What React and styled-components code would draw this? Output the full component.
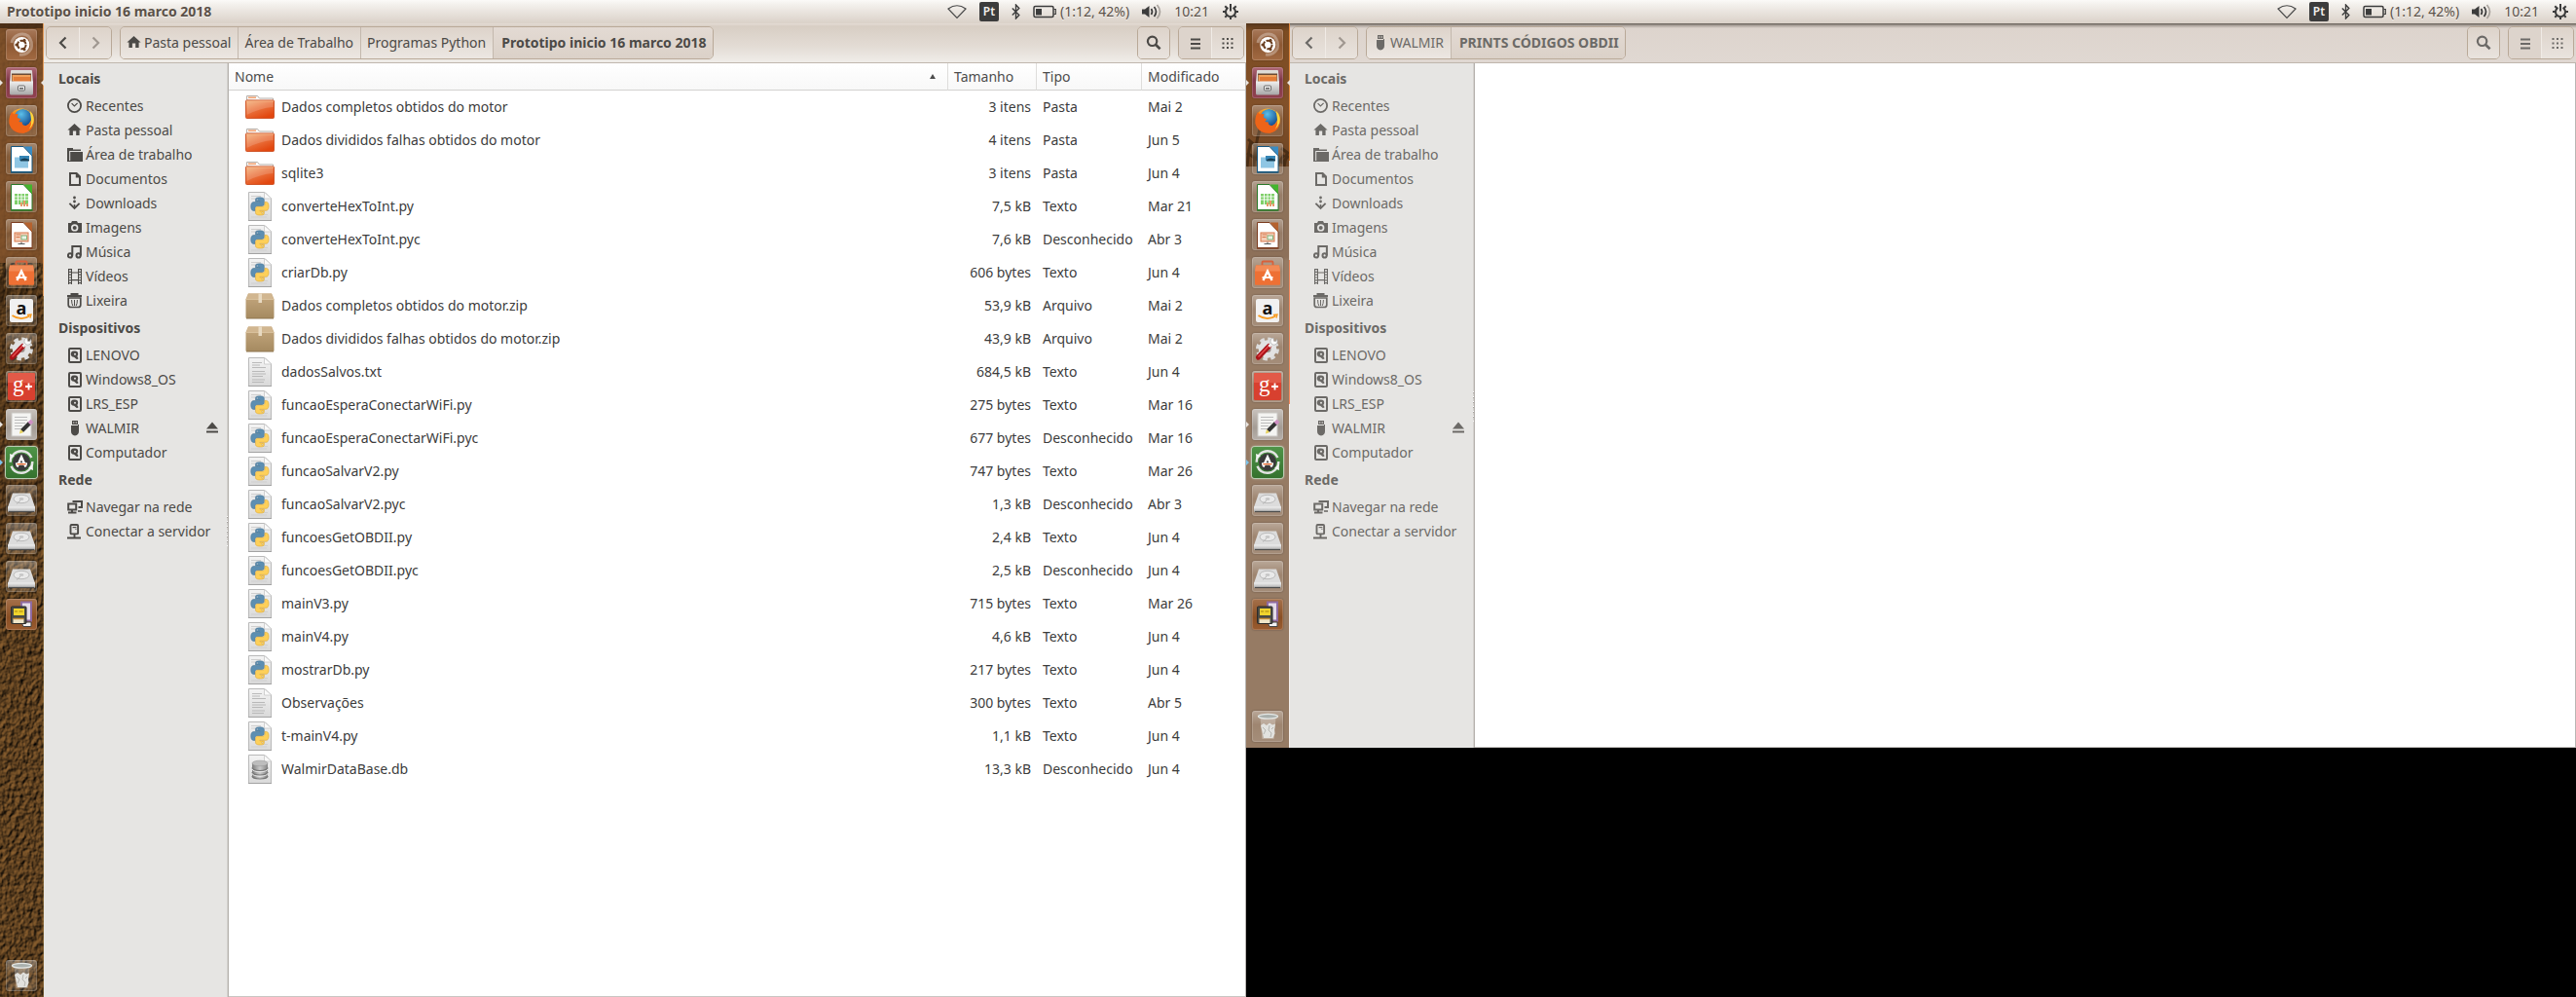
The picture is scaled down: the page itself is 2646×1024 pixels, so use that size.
import React from "react";
import styled, { createGlobalStyle, css } from "styled-components";

const GlobalStyle = createGlobalStyle`
  * { box-sizing: border-box; }
  body {
    margin: 0;
    background: #000;
    font-family: "Noto Sans", "Open Sans", sans-serif;
    font-size: 14px;
    line-height: 20px;
    color: #3c3b37;
  }
  button { font: inherit; color: inherit; }
`;

/* ---------- page frame ---------- */

const Desktop = styled.main`
  display: grid;
  grid-template-columns: 1280fr 1366fr;
  align-items: start;
  min-height: 100vh;
  background: #000;
`;

const Monitor = styled.section`
  display: flex;
  flex-direction: column;
  height: ${(p) => (p.$short ? "75vh" : "100vh")};
  min-width: 0;
`;

const Workspace = styled.div`
  display: flex;
  flex: 1;
  min-height: 0;
`;

/* ---------- top panel ---------- */

const Panel = styled.header`
  display: flex;
  align-items: center;
  height: 24px;
  padding: 0 7px;
  background: linear-gradient(#fbfaf8 0, #f3f0ec 20%, #dad1c8 100%);
  color: #5b5148;
  text-shadow: 0 1px 0 rgba(255, 255, 255, 0.6);
`;

const PanelTitle = styled.h1`
  margin: 0;
  font-size: 14px;
  line-height: 20px;
  font-weight: 700;
`;

const Indicators = styled.div`
  display: flex;
  align-items: center;
  margin-left: auto;
  gap: 13px;

  svg { display: block; }
`;

const Indicator = styled.button`
  display: flex;
  align-items: center;
  gap: 4px;
  padding: 0;
  border: 0;
  background: none;
  text-shadow: inherit;
`;

const Keyboard = styled(Indicator)`
  justify-content: center;
  width: 20px;
  height: 20px;
  border-radius: 2px;
  background: #3c3c3c;
  color: #f2efeb;
  font-size: 12px;
  font-weight: 600;
  text-shadow: none;
`;

/* ---------- launcher ---------- */

const Bar = styled.nav`
  position: relative;
  display: flex;
  flex-direction: column;
  flex: 0 0 45px;
  gap: 7px;
  padding: 6px 7px 6px 6px;
  overflow: hidden;
  background: ${(p) =>
    p.$plain
      ? "linear-gradient(#54361c 0, #7c4c22 8px, #82512a 90px, #6b4322 147px, #8f735b 147px, #8d7059 240px, #967b64 244px, #967b64 100%)"
      : "#553714"};
`;

const Wallpaper = styled.svg`
  position: absolute;
  inset: 0;
  width: 100%;
  height: 100%;
`;

const Tile = styled.button`
  position: relative;
  flex: 0 0 32px;
  width: 32px;
  height: 32px;
  padding: 0;
  border: 0;
  border-radius: 3px;
  background: ${(p) =>
    p.$tint ||
    "linear-gradient(rgba(255,255,255,0.34), rgba(255,255,255,0.08) 45%, rgba(255,255,255,0.14))"};
  box-shadow: inset 0 0 0 1px rgba(255, 255, 255, 0.16), 0 0 2px rgba(0, 0, 0, 0.35);

  ${(p) =>
    p.$framed &&
    css`box-shadow: 0 0 0 1px #b9cdb2, 0 0 3px #fff;`}

  svg { display: block; }
`;

const BottomTile = styled(Tile)`
  margin-top: auto;
`;

const Pip = styled.span`
  position: absolute;
  top: 13px;
  border: 3px solid transparent;
  ${(p) =>
    p.$right
      ? css`right: -7px; border-left-width: 0; border-right-color: #e9e4df;`
      : css`left: -6px; border-right-width: 0; border-left-color: ${p.$color || "#e9e4df"};`}
`;

/* ---------- file manager ---------- */

const Window = styled.section`
  display: flex;
  flex-direction: column;
  flex: 1;
  min-width: 0;
  background: #fff;
  color: ${(p) => (p.$faded ? "#6c6a67" : "#4c4a47")};
`;

const Toolbar = styled.div`
  display: flex;
  align-items: center;
  gap: 8px;
  height: 41px;
  padding: 0 2px;
  border-bottom: 1px solid #bfb6ad;
  background: ${(p) =>
    p.$faded
      ? "linear-gradient(#5d5750 0, #a89f97 2px, #ddd4cd 5px, #e0d8d2 100%)"
      : "linear-gradient(#e4dcd5 0, #d8cec4 3px, #e3dcd5 60%, #f0ede9 100%)"};
`;

const Group = styled.div`
  display: flex;
  height: 34px;
  overflow: hidden;
  border: 1px solid #b9a998;
  border-radius: 5px;
  box-shadow: inset 0 1px 1px rgba(120, 95, 70, 0.15);
`;

const ToolButton = styled.button`
  display: flex;
  align-items: center;
  justify-content: center;
  width: ${(p) => (p.$last ? "32px" : "34px")};
  padding: 0;
  border: 0;
  border-right: ${(p) => (p.$last ? "0" : "1px solid #f0ebe6")};
  background: ${(p) => (p.$on ? "#ddd4cc" : "linear-gradient(#ddd3ca, #e9e3de)")};
  color: ${(p) => (p.$dim ? "#a09891" : "inherit")};
`;

const Spacer = styled.div`
  flex: 1;
`;

const Crumb = styled.button`
  display: flex;
  align-items: center;
  gap: 2px;
  padding: 0 7px 0 6px;
  border: 0;
  border-right: 1px solid #c3b8ad;
  background: linear-gradient(#ddd3ca, #ece7e2);
  white-space: nowrap;

  &:last-child {
    padding: 0 6px 0 8px;
    border-right: 0;
    background: linear-gradient(#e3dad3, #dbd1c8);
    font-weight: 700;
  }
`;

const Body = styled.div`
  display: flex;
  flex: 1;
  min-height: 0;
`;

const Side = styled.aside`
  position: relative;
  flex: 0 0 190px;
  border-right: 1px solid #b5b1ad;
  background: #e6e5e3;
  box-shadow: inset -1px 0 0 #d3d1ce;
`;

const Grip = styled.span`
  position: absolute;
  top: calc(50% - 15px);
  right: 0;
  width: 1px;
  height: 31px;
  background: repeating-linear-gradient(#fff 0 1px, #a5a19d 1px 2px, #d3d1ce 2px 5px);
`;

const SideTitle = styled.h2`
  margin: 0;
  padding-left: 15px;
  font-size: 14px;
  line-height: 31px;
  font-weight: 700;
`;

const SideList = styled.ul`
  margin: 0;
  padding: 0;
  list-style: none;
`;

const SideItem = styled.li`
  display: flex;
  align-items: center;
  height: 25px;
  padding: 0 9px 0 24px;
`;

const SideLink = styled.a`
  display: flex;
  align-items: center;
  gap: 3px;
  color: inherit;
  text-decoration: none;
  white-space: nowrap;
`;

const Eject = styled.button`
  display: flex;
  margin-left: auto;
  padding: 0;
  border: 0;
  background: none;
`;

const Content = styled.div`
  flex: 1;
  min-width: 0;
  border-right: 1px solid #b9b6b3;
  border-bottom: 1px solid #c9c6c3;
  background: #fff;
`;

const Files = styled.table`
  width: 100%;
  border-collapse: separate;
  border-spacing: 0;
  table-layout: fixed;
  color: #3c3c3c;
`;

const Head = styled.th`
  width: ${(p) => p.$width || "auto"};
  height: 28px;
  padding: 0 6px;
  border-right: ${(p) => (p.$last ? "0" : "1px solid #dedddb")};
  border-bottom: 1px solid #d3d2d0;
  background: linear-gradient(#fff, #f8f8f8);
  color: #4c4c4c;
  font-weight: 400;
  text-align: left;
`;

const HeadRow = styled.span`
  display: flex;
  align-items: center;
  justify-content: space-between;
  padding-right: 6px;
`;

const Cell = styled.td`
  height: 34px;
  padding: 0 6px;
  text-align: ${(p) => (p.$right ? "right" : "left")};
  white-space: nowrap;
`;

const NameCell = styled.div`
  display: flex;
  align-items: center;
  gap: 6px;
  padding-left: 10px;
`;

/* ---------- symbolic icons, drawn on a 16 unit grid ---------- */

const glyphs = {
  clock: (
    <g fill="none" stroke="currentColor">
      <circle cx="7.5" cy="7.5" r="6.6" strokeWidth="1.8" />
      <path d="M4.6 5.2 7.4 8l3.2-3.2" strokeWidth="1.2" />
    </g>
  ),
  home: <path fill="currentColor" d="M7.5 1 .4 7.4h2V13h3.5V8.6h3.3V13h3.4V7.4h2z" />,
  folder: (
    <path fill="currentColor" d="M0 1h6v1.6h8V4H2.2v10H15V15H0zM3.2 5H16v10H3.2z" />
  ),
  doc: (
    <path fill="currentColor" fillRule="evenodd" d="M2 1h8l4 4v10H2zM4 3v10h8V6.4H8.8V3z" />
  ),
  down: (
    <g>
      <circle cx="7.5" cy="2" r="1.4" fill="currentColor" />
      <circle cx="7.5" cy="6" r="1.4" fill="currentColor" />
      <path d="M2.4 7.8 7.5 13l5.1-5.2" fill="none" stroke="currentColor" strokeWidth="1.9" />
      <path d="M7.5 9v3" stroke="currentColor" strokeWidth="1.6" />
    </g>
  ),
  camera: (
    <g>
      <path
        fill="currentColor"
        fillRule="evenodd"
        d="M1 3h3l1-2h5l1 2h4v10H1zM7.7 4.2a3.7 3.7 0 1 0 0 7.4 3.7 3.7 0 0 0 0-7.4z"
      />
      <circle cx="7.7" cy="7.9" r="2" fill="currentColor" />
    </g>
  ),
  music: (
    <g fill="none" stroke="currentColor" strokeWidth="2">
      <circle cx="3" cy="11.4" r="2.1" />
      <circle cx="11.6" cy="11.4" r="2.1" />
      <path d="M5.3 11.4V2h8.6v9.4" />
    </g>
  ),
  film: (
    <g stroke="currentColor" fill="none">
      <path d="M1.5 0v16M4.5 0v16M11.5 0v16M14.5 0v16" strokeWidth="1" />
      <path d="M4 4h8M4 11.6h8" strokeWidth="1.2" />
      <path d="M3 0v16M13 0v16" strokeWidth="2.6" strokeDasharray="1.2 1.6" />
    </g>
  ),
  trash: (
    <g fill="none" stroke="currentColor">
      <path d="M3.5 1h8M0 3h15" strokeWidth="1.8" />
      <path d="M1.2 5h12.6v7q0 2.500-2.500 2.500H3.700q-2.500 0-2.500-2.500z" strokeWidth="1.700" />
      <path d="M4.600 7q0 4 1.200 6M7.500 7v6M10.400 7q0 4-1.200 6" strokeWidth="1" />
    </g>
  ),
  disk: (
    <g>
      <rect x="2" y="1" width="12" height="14" rx="1" fill="none" stroke="currentColor" strokeWidth="2" />
      <path fill="currentColor" d="M8 3.6a3.2 3.2 0 0 1 3.2 3.2c0 1-.4 1.700-.9 2.300l1.300 2.200-1.600.9-3-2.400A3.200 3.200 0 1 1 8 3.600z" />
      <circle cx="8" cy="6.8" r="1" fill="#e6e5e3" />
    </g>
  ),
  usb: (
    <path
      fill="currentColor"
      fillRule="evenodd"
      d="M5 0h6v4h1v7q0 3.600-4 4.600Q4 14.600 4 11V4.900h7V4H5zM6.300 1.200v1.500h1V1.200zM8.700 1.200v1.500h1V1.200z"
    />
  ),
  network: (
    <g fill="none" stroke="currentColor" strokeWidth="2">
      <rect x="1.2" y="4.500" width="8" height="6" />
      <path d="M6.500 3V2H15v6h-3.500M1 13.500h8.500M5 11v2" />
      <path d="M11 12h4" strokeWidth="1.600" />
    </g>
  ),
  server: (
    <g fill="none" stroke="currentColor" strokeWidth="1.900">
      <rect x="3.500" y="1" width="7.600" height="9.400" rx="1" />
      <path d="M7.500 10.500V14M0 14.500h14" />
      <path d="M5.600 3.600h3.800" strokeWidth="1.200" />
      <path d="M8.400 5.500h1" strokeWidth="1.200" />
    </g>
  ),
  eject: <path fill="currentColor" d="M9 1.500 15 8.500H3zM3 10.500h12v2H3z" />,
  back: <path d="M10.500 2.500 5 8l5.500 5.500" fill="none" stroke="currentColor" strokeWidth="2.200" />,
  next: <path d="M5.500 2.500 11 8l-5.500 5.500" fill="none" stroke="currentColor" strokeWidth="2.200" />,
  search: (
    <g fill="none" stroke="currentColor">
      <circle cx="6.600" cy="6.300" r="4.700" strokeWidth="2.200" />
      <path d="m10 9.800 4.600 4.400" strokeWidth="2.600" />
    </g>
  ),
  list: <path d="M3 4.500h10M3 9h10M3 13.500h10" stroke="currentColor" strokeWidth="2" />,
  grid: (
    <path
      d="M2.500 4h11M2.500 8.500h11M2.500 13h11"
      stroke="currentColor"
      strokeWidth="2"
      strokeDasharray="2 2.500"
    />
  ),
};

const Glyph = ({ name, size = 16 }) => (
  <svg width={size} height={size} viewBox="0 0 16 16" aria-hidden="true">
    {glyphs[name]}
  </svg>
);

/* ---------- file type icons ---------- */

const pythonHalf =
  "M14.25.18l.9.2.73.26.59.3.45.32.34.34.25.34.16.33.1.3.04.26.02.2-.01.13V8.5l-.05.63-.13.55-.21.46-.26.38-.3.31-.33.25-.35.19-.35.14-.33.1-.3.07-.26.04-.21.02H8.77l-.69.05-.59.14-.5.22-.41.27-.33.32-.27.35-.2.36-.15.37-.1.35-.07.32-.04.27-.02.21v3.06H3.17l-.21-.03-.28-.07-.32-.12-.35-.18-.36-.26-.36-.36-.35-.46-.32-.59-.28-.73-.21-.88-.14-1.05-.05-1.23.06-1.22.16-1.04.24-.87.32-.71.36-.57.4-.44.42-.33.42-.24.4-.16.36-.1.32-.05.24-.01h.16l.06.01h8.16v-.83H6.18l-.01-2.75-.02-.37.05-.34.11-.31.17-.28.25-.26.31-.23.38-.2.44-.18.51-.15.58-.12.64-.1.71-.06.77-.04.84-.02 1.27.05zm-6.3 1.98l-.23.33-.08.41.08.41.23.34.33.22.41.09.41-.09.33-.22.23-.34.08-.41-.08-.41-.23-.33-.33-.22-.41-.09-.41.09z";

const Sheet = () => (
  <g>
    <path d="M4.500 1.500H21L27.500 8v22.500h-23z" fill="url(#paper)" stroke="#b9b9b9" />
    <path d="M4 30.500h24" stroke="#a3a3a3" />
    <path d="M20.500 1.500v6.500H28z" fill="#fafafa" stroke="#c6c6c6" strokeWidth=".8" />
  </g>
);

const fileArt = {
  folder: (
    <g>
      <path d="M2.500 9V4.500h11l2 2.500h14V10z" fill="#fafafa" stroke="#b7b0aa" />
      <path d="M4 6.200h8" stroke="#f08a4c" strokeWidth="1.200" />
      <rect x="1.500" y="9" width="29" height="18.500" rx="1" fill="url(#orange)" stroke="#d0562a" />
      <path d="M2.500 10h27v6Q16 17 2.500 24z" fill="#fff" opacity=".16" />
      <path d="M2 10h28" stroke="#f4b184" />
    </g>
  ),
  python: (
    <g>
      <Sheet />
      <path d="M7 5.500h10M7 8h6M7 27h16M19 24.500h5" stroke="#cfcfcf" />
      <g transform="translate(6.800 6.800) scale(.76)">
        <path d={pythonHalf} fill="#5d8fb2" stroke="#44708f" strokeWidth=".7" />
        <path d={pythonHalf} fill="#fdd05a" stroke="#d9a32c" strokeWidth=".7" transform="rotate(180 12 12)" />
      </g>
    </g>
  ),
  text: (
    <g>
      <Sheet />
      <path
        d="M8 6.500h10M8 9h8M8 11.500h14M8 15.500h13M8 18h14M8 20.500h11M8 24h13M8 26.500h12"
        stroke="#b3b3b3"
        strokeWidth=".9"
      />
    </g>
  ),
  database: (
    <g>
      <Sheet />
      <path d="M8 10v13a8 3 0 0 0 16 0V10z" fill="url(#steel)" />
      <path d="M8 14.500a8 3 0 0 0 16 0M8 19a8 3 0 0 0 16 0M8 23a8 3 0 0 0 16 0" fill="none" stroke="#777" strokeWidth="1.200" />
      <path d="M8 15.800a8 3 0 0 0 16 0M8 20.300a8 3 0 0 0 16 0" fill="none" stroke="#eee" strokeWidth=".9" />
      <ellipse cx="16" cy="10" rx="8" ry="2.800" fill="#bdbdbd" stroke="#999" strokeWidth=".6" />
    </g>
  ),
  archive: (
    <g>
      <path d="M4 3.500h24l2.500 6v18.500q0 1-1 1h-27q-1 0-1-1V9.500z" fill="url(#card)" />
      <path d="M4 3.500h24l2.500 6h-29z" fill="#d1b690" />
      <path d="M1.500 9.500h29" stroke="#dcc6a3" strokeWidth=".8" />
      <path d="M14.500 3.500h3.500V13h-3.500z" fill="#e8dac2" />
      <path d="M2 29h28" stroke="#8f7650" />
    </g>
  ),
};

const FileIcon = ({ kind }) => (
  <svg width="32" height="32" viewBox="0 0 32 32" aria-hidden="true">
    {fileArt[kind]}
  </svg>
);

const Paints = styled.svg`
  position: absolute;
`;

const SharedPaints = () => (
  <Paints width="0" height="0" aria-hidden="true">
    <defs>
      <linearGradient id="paper" x2="0" y2="1">
        <stop stopColor="#f4f4f4" />
        <stop offset="1" stopColor="#d9d9d9" />
      </linearGradient>
      <linearGradient id="orange" x2=".6" y2="1">
        <stop stopColor="#f3b27a" />
        <stop offset=".5" stopColor="#ea7440" />
        <stop offset="1" stopColor="#e2470f" />
      </linearGradient>
      <linearGradient id="steel">
        <stop stopColor="#7d7d7d" />
        <stop offset=".5" stopColor="#c9c9c9" />
        <stop offset="1" stopColor="#858585" />
      </linearGradient>
      <linearGradient id="card" x2="0" y2="1">
        <stop stopColor="#c5a87f" />
        <stop offset="1" stopColor="#a58a60" />
      </linearGradient>
      <radialGradient id="flame" cx=".3" cy=".75" r=".9">
        <stop stopColor="#e8321a" />
        <stop offset=".55" stopColor="#f27416" />
        <stop offset="1" stopColor="#ffd83a" />
      </radialGradient>
      <radialGradient id="globe" cx=".4" cy=".3" r=".8">
        <stop stopColor="#5cc0ea" />
        <stop offset="1" stopColor="#0c3f86" />
      </radialGradient>
      <linearGradient id="metal" x2="0" y2="1">
        <stop stopColor="#f0f0f0" />
        <stop offset="1" stopColor="#a6a6a6" />
      </linearGradient>
      <filter id="bark" x="0" y="0" width="100%" height="100%" colorInterpolationFilters="sRGB">
        <feTurbulence type="fractalNoise" baseFrequency="0.22 0.17" numOctaves="3" seed="8" />
        <feDiffuseLighting surfaceScale="2" lightingColor="#8f6230">
          <feDistantLight azimuth="225" elevation="40" />
        </feDiffuseLighting>
      </filter>
    </defs>
  </Paints>
);

/* ---------- launcher icons ---------- */

const Office = ({ edge, fold, children }) => (
  <g>
    <path d="M5.500 3.500H18L27 13v16.500H5.500z" fill="#fff" stroke={edge} />
    <path d="M5 30h22.500" stroke={edge} strokeWidth="1.400" />
    <path d="M18.500 3.500H27V13z" fill={fold} />
    {children}
  </g>
);

const appArt = {
  dash: (
    <g>
      <path d="M6 14a11 11 0 0 1 17-7q5 6 3 13-4 7-12 6" fill="none" stroke="#fff" strokeOpacity=".3" strokeWidth="3" />
      <circle cx="16.300" cy="16" r="8" fill="#fff" />
      <circle cx="16.300" cy="16" r="4.300" fill="none" stroke="#6b3f20" strokeWidth="2" strokeDasharray="7.600 1.400" />
      <circle cx="10.900" cy="16" r="1.500" fill="#6b3f20" />
      <circle cx="19" cy="11.300" r="1.500" fill="#6b3f20" />
      <circle cx="19" cy="20.700" r="1.500" fill="#6b3f20" />
    </g>
  ),
  files: (
    <g>
      <path d="M5 4q0-1 1-1h20q1 0 1 1l1 12H4z" fill="#dedbd6" />
      <path d="M6 6.500h20V15H6z" fill="#6b4a34" />
      <path d="M6.500 8h19v6.500h-19z" fill="#f0a15c" />
      <path d="M8 10h17v5H8z" fill="#e27c37" />
      <path d="M4 14.500h24V27q0 1.500-1.500 1.500h-21Q4 28.500 4 27z" fill="url(#metal)" />
      <rect x="12.500" y="19" width="7" height="5" rx="1" fill="#eee" stroke="#6a6a6a" />
      <path d="M14 21.800h4" stroke="#555" strokeWidth="1.400" />
    </g>
  ),
  firefox: (
    <g>
      <circle cx="16" cy="16" r="12.600" fill="url(#flame)" />
      <circle cx="17.500" cy="12.800" r="8.800" fill="url(#globe)" />
      <path d="M4 11.500 6 7l2 2.500q2.500-1 4.500-.3l-.8 3.600 3.600 1.600-2 2.500 3.500.6q-.5 4 5.200 3.300 5-2 4.700-9l2 3q.5 12-10.500 13.900Q6 29 3.500 19z" fill="#ee6418" />
      <path d="M25 6q5 5 3.300 12-1.500 4.500-4.500 6.500 3-4.500 2.200-9.500z" fill="#ffd43a" />
    </g>
  ),
  writer: (
    <Office edge="#14567f" fold="#3a8cc4">
      <rect x="9" y="14.500" width="14" height="11" fill="#8fc6e4" />
      <path d="M14 13h10v5H14z" fill="#3585b5" />
      <path d="M15 17q4-3 9 0v1.500h-9z" fill="#183f55" />
    </Office>
  ),
  calc: (
    <Office edge="#2a7a2a" fold="#43b52d">
      <path d="M9 13h14v11H9z" fill="#7fd06a" />
      <path d="M9 16h14M9 19h14M12.500 13v11M16 13v11M19.500 13v11" stroke="#fff" strokeWidth=".9" />
      <path d="M16 26v-4M19 26v-6M22 26v-3" stroke="#e8986a" strokeWidth="2" />
    </Office>
  ),
  impress: (
    <Office edge="#7b3c1f" fold="#b5622e">
      <rect x="9" y="14" width="14" height="9" fill="#f4cdb7" stroke="#d7774a" />
      <path d="M10.500 16h5M10.500 18.500h4" stroke="#d7774a" />
      <rect x="16" y="17" width="5.500" height="4" fill="#eaf4e6" stroke="#5ba05a" strokeWidth=".7" />
      <path d="M16 23.500v2M12.500 25.500h7" stroke="#555" />
    </Office>
  ),
  store: (
    <g>
      <path d="M10.500 8.500V5.500q0-1 1-1h9q1 0 1 1v3" fill="none" stroke="#d8603a" strokeWidth="1.800" />
      <path d="M4 8.500h24l1 6v13.500q0 .8-1 .8H4q-1 0-1-.8V14.500z" fill="#ee7034" />
      <path d="M4 8.500h24l1 6H3z" fill="#f38a55" />
      <path d="M11.500 24 16 14.500l4.500 9.500" fill="none" stroke="#fff" strokeWidth="2.400" />
      <path d="M10.500 21h11" stroke="#fff" strokeWidth="1.800" />
    </g>
  ),
  amazon: (
    <g>
      <rect x="4" y="4" width="24" height="24" rx="2" fill="#f1f1f1" />
      <text x="16" y="19.500" textAnchor="middle" fontFamily="Open Sans, sans-serif" fontWeight="700" fontSize="18" fill="#111">a</text>
      <path d="M6.500 21q9 6 18 .6" fill="none" stroke="#f79a1e" strokeWidth="1.800" />
      <path d="m22 20.500 4-.5-1 3.600" fill="none" stroke="#f79a1e" strokeWidth="1.300" />
    </g>
  ),
  settings: (
    <g>
      <circle cx="16" cy="16.500" r="10.200" fill="none" stroke="#dcdcdc" strokeWidth="3.500" strokeDasharray="4.600 3.400" />
      <circle cx="16" cy="16.500" r="9.300" fill="#e2e2e2" />
      <circle cx="16" cy="16.500" r="3.600" fill="#9b8f88" />
      <path d="m6.500 25 11-11.500" stroke="#a91318" strokeWidth="5.200" strokeLinecap="round" />
      <path d="m7 24 10-10.500" stroke="#e5484b" strokeWidth="1.600" strokeLinecap="round" />
      <path d="m17.500 14 3.500-4" stroke="#eee" strokeWidth="3" />
      <path d="M25.500 6.500a3.600 3.600 0 1 1-3.500-1.500l.4 3.200 2 .6z" fill="#fafafa" stroke="#a9a9a9" strokeWidth=".7" />
    </g>
  ),
  gplus: (
    <g>
      <rect x="2" y="2" width="28" height="28" rx="1.500" fill="#d8402f" />
      <path d="M2 3.500Q2 2 3.500 2h25Q30 2 30 3.500V12H2z" fill="#e25a48" />
      <text x="7" y="21" fontFamily="Liberation Serif, serif" fontSize="23" fill="#fff">g</text>
      <path d="M20 16h7M23.500 12.500v7" stroke="#fff" strokeWidth="1.800" />
    </g>
  ),
  editor: (
    <g>
      <rect x="6" y="4" width="20" height="24" fill="#f4f4f2" stroke="#c9c7c4" />
      <path d="M9 8.500h13M9 11.500h13M9 14.500h11M9 17.500h8M9 20.500h6" stroke="#b5b5b5" strokeWidth=".9" />
      <path d="m16.500 22.500 8-8" stroke="#333" strokeWidth="4" />
      <path d="m24 15 3-2.800" stroke="#cf8fc3" strokeWidth="4" />
      <path d="m14 25.500 1-4.500 3.200 3z" fill="#e8d25a" />
    </g>
  ),
  updater: (
    <g>
      <circle cx="16" cy="15.500" r="11.300" fill="none" stroke="#e4e4e4" strokeWidth="2.400" strokeDasharray="31 4" />
      <circle cx="16" cy="15.500" r="9" fill="#3a3a3a" />
      <path d="m4 7 .5 6L9 9zM28 24l-.5-6-4.500 4z" fill="#f5f5f5" />
      <path d="M11.500 20.500 16 10.500l4.500 10" fill="none" stroke="#fff" strokeWidth="2.400" />
      <path d="M10 17.500h12" stroke="#fff" strokeWidth="2.400" />
      <path d="M11.500 17.700h9" stroke="#ec6a2d" strokeWidth="1.300" />
    </g>
  ),
  drive: (
    <g>
      <path d="M7 8.500h18L30 23H2z" fill="#dcdcdc" />
      <path d="M2 22.500h28v4q0 1.500-1.500 1.500h-25Q2 28 2 26.500z" fill="url(#metal)" />
      <path d="M3 27.500h26" stroke="#4c4c4c" strokeWidth="1.200" />
      <ellipse cx="16" cy="14.500" rx="8" ry="4.200" fill="#e9e9e9" stroke="#b4b4b4" strokeWidth=".9" />
      <ellipse cx="16" cy="14.500" rx="2.400" ry="1.200" fill="#c3c3c3" />
      <path d="m11 19.500 4-3.500" stroke="#b4b4b4" />
    </g>
  ),
  floppy: (
    <g>
      <rect x="16" y="3.500" width="10" height="19" fill="#e4dbe8" stroke="#8e6ba2" strokeWidth="2" />
      <path d="M16 24h10v4.500h-8z" fill="#f2f2f2" stroke="#444" />
      <rect x="5.500" y="8" width="15.500" height="17.500" rx="1" fill="#4a4a45" stroke="#2c2c2a" />
      <rect x="8" y="10" width="11" height="7" fill="#f0d42e" />
      <path d="M9 13h3M13.500 13h4" stroke="#a9850f" />
      <rect x="7.500" y="20.500" width="11" height="4.500" fill="#efe6c9" />
      <path d="M7.500 20.500h11" stroke="#c98f3a" strokeWidth="1.500" />
    </g>
  ),
  bin: (
    <g>
      <path d="M8.500 7h16l-1.700 21q0 1-1 1h-10.600q-1 0-1-1z" fill="#fff" opacity=".28" />
      <ellipse cx="16.500" cy="5.800" rx="10" ry="2.400" fill="#aab0ad" stroke="#e4e7e5" strokeWidth="1.300" />
      <path d="m9 15 3-2 3 2 3-2.500 3 2 3-1-1 6 .5 4-2 4.500h-9.500l-1-4.500z" fill="#e2e2df" />
      <path d="m11 17 3 3-2 4M18 15l-1 5 3 3-1 4M22 17l-2 2" fill="none" stroke="#b5b5b0" />
    </g>
  ),
};

const apps = [
  { icon: "dash", label: "Painel inicial", tint: "linear-gradient(#a8795a, #8d5833 50%, #a26a42)" },
  { icon: "files", label: "Arquivos", tint: "linear-gradient(#b06a78, #823a4b 40%, #90404f)", pip: "#e9e4df", focused: true },
  { icon: "firefox", label: "Firefox" },
  { icon: "writer", label: "Writer" },
  { icon: "calc", label: "Calc" },
  { icon: "impress", label: "Impress" },
  { icon: "store", label: "Central de programas" },
  { icon: "amazon", label: "Amazon" },
  { icon: "settings", label: "Configurações" },
  { icon: "gplus", label: "Google+" },
  { icon: "editor", label: "Editor de texto", tint: "linear-gradient(#c9c3be, #a49c95 60%, #b7b0aa)", pip: "#e9e4df" },
  { icon: "updater", label: "Atualizador", tint: "linear-gradient(#4f9448, #35722e)", pip: "#7cc3ea", framed: true },
  { icon: "drive", label: "LENOVO" },
  { icon: "drive", label: "Windows8_OS" },
  { icon: "drive", label: "LRS_ESP" },
  { icon: "floppy", label: "WALMIR", tint: "linear-gradient(#a5714b, #8a4f24 60%, #9a5c30)" },
];

const AppArt = ({ name }) => (
  <svg width="32" height="32" viewBox="0 0 32 32" aria-hidden="true">
    {appArt[name]}
  </svg>
);

const LeftWallpaper = () => (
  <Wallpaper aria-hidden="true">
    <rect width="45" height="100%" filter="url(#bark)" />
    <rect width="45" height="246" fill="#80512a" opacity=".88" />
    <rect y="270" width="45" height="250" fill="#3a2410" opacity=".25" />
    <rect width="45" height="5" fill="#2b1a0c" opacity=".6" />
    <path d="M2 290V262l4-10M9 290V256l8-8M18 290l8-24M30 290l8-20" fill="none" stroke="#2c1b0c" strokeOpacity=".5" strokeWidth="4" />
    <rect x="44" width="1" height="280" fill="#e39a58" />
    <rect x="44" y="280" width="1" height="100%" fill="#a98b50" opacity=".4" />
  </Wallpaper>
);

const RightWallpaper = () => (
  <Wallpaper aria-hidden="true">
    <path
      d="M1 147q2-20 4-26M8 147q1-22 6-38M13 147l-2-16M1 133l12 8M2 119l9 8M39 147l3-14M31 147l8-12M44 136l-8 8M36 128l8 6"
      stroke="#39230f"
      strokeOpacity=".7"
      strokeWidth="3"
      fill="none"
    />
    <rect x="44" width="1" height="141" fill="#e0883f" />
    <rect x="44" y="141" width="1" height="102" fill="#e6dcd3" />
    <rect x="44" y="243" width="1" height="148" fill="#f5875c" />
    <rect x="44" y="391" width="1" height="100%" fill="#f4f0ec" />
  </Wallpaper>
);

const Launcher = ({ plain }) => (
  <Bar $plain={plain} aria-label="Lançador">
    {plain ? <RightWallpaper /> : <LeftWallpaper />}
    {apps.map((app, i) => (
      <Tile key={i} $tint={app.tint} $framed={app.framed} aria-label={app.label}>
        <AppArt name={app.icon} />
        {app.pip && <Pip $color={app.pip} />}
        {app.focused && <Pip $right />}
      </Tile>
    ))}
    <BottomTile aria-label="Lixeira">
      <AppArt name="bin" />
    </BottomTile>
  </Bar>
);

/* ---------- panel ---------- */

const TopPanel = ({ title }) => (
  <Panel>
    {title && <PanelTitle>{title}</PanelTitle>}
    <Indicators>
      <Indicator aria-label="Rede">
        <svg width="20" height="16" viewBox="0 0 20 16">
          <path d="M1 5Q10-1.500 19 5l-9 9.500z" fill="none" stroke="#4a4a4a" strokeWidth="1.200" />
        </svg>
      </Indicator>
      <Keyboard>Pt</Keyboard>
      <Indicator aria-label="Bluetooth">
        <svg width="9" height="16" viewBox="0 0 9 16">
          <path d="m.8 4.500 7 7L4.500 15V1l3.300 3.500-7 7" fill="none" stroke="#3c3c3c" strokeWidth="1.400" />
        </svg>
      </Indicator>
      <Indicator>
        <svg width="24" height="14" viewBox="0 0 24 14">
          <rect x="1" y="1.500" width="20" height="11" rx="1.500" fill="none" stroke="#3c3c3c" strokeWidth="1.500" />
          <path d="M3 4h6v6.500H3z" fill="#3c3c3c" />
          <path d="M21.500 4.500h1.800v5h-1.800" fill="none" stroke="#3c3c3c" strokeWidth="1.200" />
        </svg>
        (1:12, 42%)
      </Indicator>
      <Indicator aria-label="Som">
        <svg width="20" height="16" viewBox="0 0 20 16">
          <path d="M0 5.500h3L7.500 2v12L3 10.500H0z" fill="#3c3c3c" />
          <path d="M9.500 5q2 3 0 6M12.500 3q4 5 0 10" fill="none" stroke="#3c3c3c" strokeWidth="1.700" />
          <path d="M15.500 1q6 7 0 14" fill="none" stroke="#a9a39d" strokeWidth="1.700" />
        </svg>
      </Indicator>
      <Indicator>10:21</Indicator>
      <Indicator aria-label="Sistema">
        <svg width="18" height="18" viewBox="0 0 18 18">
          <path d="M6.500 4.800a5 5 0 1 0 5 0" fill="none" stroke="#3c3c3c" strokeWidth="2" />
          <path d="M9 1v7.500M1 9h3M14 9h3M3.300 3.300l2 2M14.700 3.300l-2 2M3.300 14.700l2-2M14.700 14.700l-2-2M9 14v3" stroke="#3c3c3c" strokeWidth="2" />
        </svg>
      </Indicator>
    </Indicators>
  </Panel>
);

/* ---------- file manager parts ---------- */

const places = [
  {
    title: "Locais",
    items: [
      ["clock", "Recentes"],
      ["home", "Pasta pessoal"],
      ["folder", "Área de trabalho"],
      ["doc", "Documentos"],
      ["down", "Downloads"],
      ["camera", "Imagens"],
      ["music", "Música"],
      ["film", "Vídeos"],
      ["trash", "Lixeira"],
    ],
  },
  {
    title: "Dispositivos",
    items: [
      ["disk", "LENOVO"],
      ["disk", "Windows8_OS"],
      ["disk", "LRS_ESP"],
      ["usb", "WALMIR", true],
      ["disk", "Computador"],
    ],
  },
  {
    title: "Rede",
    items: [
      ["network", "Navegar na rede"],
      ["server", "Conectar a servidor"],
    ],
  },
];

const Places = () => (
  <Side>
    {places.map((group) => (
      <React.Fragment key={group.title}>
        <SideTitle>{group.title}</SideTitle>
        <SideList>
          {group.items.map(([icon, label, removable]) => (
            <SideItem key={label}>
              <SideLink href="#">
                <Glyph name={icon} />
                {label}
              </SideLink>
              {removable && (
                <Eject aria-label={`Ejetar ${label}`}>
                  <Glyph name="eject" />
                </Eject>
              )}
            </SideItem>
          ))}
        </SideList>
      </React.Fragment>
    ))}
    <Grip />
  </Side>
);

const WindowBar = ({ faded, children }) => (
  <Toolbar $faded={faded}>
    <Group>
      <ToolButton aria-label="Voltar"><Glyph name="back" /></ToolButton>
      <ToolButton aria-label="Avançar" $last $dim><Glyph name="next" /></ToolButton>
    </Group>
    <Group>{children}</Group>
    <Spacer />
    <Group>
      <ToolButton aria-label="Pesquisar" $last><Glyph name="search" /></ToolButton>
    </Group>
    <Group>
      <ToolButton aria-label="Lista" $on><Glyph name="list" /></ToolButton>
      <ToolButton aria-label="Ícones" $last><Glyph name="grid" /></ToolButton>
    </Group>
  </Toolbar>
);

const files = [
  ["folder", "Dados completos obtidos do motor", "3 itens", "Pasta", "Mai 2"],
  ["folder", "Dados divididos falhas obtidos do motor", "4 itens", "Pasta", "Jun 5"],
  ["folder", "sqlite3", "3 itens", "Pasta", "Jun 4"],
  ["python", "converteHexToInt.py", "7,5 kB", "Texto", "Mar 21"],
  ["python", "converteHexToInt.pyc", "7,6 kB", "Desconhecido", "Abr 3"],
  ["python", "criarDb.py", "606 bytes", "Texto", "Jun 4"],
  ["archive", "Dados completos obtidos do motor.zip", "53,9 kB", "Arquivo", "Mai 2"],
  ["archive", "Dados divididos falhas obtidos do motor.zip", "43,9 kB", "Arquivo", "Mai 2"],
  ["text", "dadosSalvos.txt", "684,5 kB", "Texto", "Jun 4"],
  ["python", "funcaoEsperaConectarWiFi.py", "275 bytes", "Texto", "Mar 16"],
  ["python", "funcaoEsperaConectarWiFi.pyc", "677 bytes", "Desconhecido", "Mar 16"],
  ["python", "funcaoSalvarV2.py", "747 bytes", "Texto", "Mar 26"],
  ["python", "funcaoSalvarV2.pyc", "1,3 kB", "Desconhecido", "Abr 3"],
  ["python", "funcoesGetOBDII.py", "2,4 kB", "Texto", "Jun 4"],
  ["python", "funcoesGetOBDII.pyc", "2,5 kB", "Desconhecido", "Jun 4"],
  ["python", "mainV3.py", "715 bytes", "Texto", "Mar 26"],
  ["python", "mainV4.py", "4,6 kB", "Texto", "Jun 4"],
  ["python", "mostrarDb.py", "217 bytes", "Texto", "Jun 4"],
  ["text", "Observações", "300 bytes", "Texto", "Abr 5"],
  ["python", "t-mainV4.py", "1,1 kB", "Texto", "Jun 4"],
  ["database", "WalmirDataBase.db", "13,3 kB", "Desconhecido", "Jun 4"],
];

const FileTable = () => (
  <Files>
    <thead>
      <tr>
        <Head scope="col">
          <HeadRow>
            Nome
            <svg width="6" height="5" viewBox="0 0 6 5" aria-hidden="true">
              <path d="M3 0 6 5H0z" fill="#4c4c4c" />
            </svg>
          </HeadRow>
        </Head>
        <Head scope="col" $width="91px">Tamanho</Head>
        <Head scope="col" $width="108px">Tipo</Head>
        <Head scope="col" $width="106px" $last>Modificado</Head>
      </tr>
    </thead>
    <tbody>
      {files.map(([kind, name, size, type, date]) => (
        <tr key={name}>
          <Cell>
            <NameCell>
              <FileIcon kind={kind} />
              {name}
            </NameCell>
          </Cell>
          <Cell $right>{size}</Cell>
          <Cell>{type}</Cell>
          <Cell>{date}</Cell>
        </tr>
      ))}
    </tbody>
  </Files>
);

export default function App() {
  return (
    <>
      <GlobalStyle />
      <SharedPaints />
      <Desktop>
        <Monitor>
          <TopPanel title="Prototipo inicio 16 marco 2018" />
          <Workspace>
            <Launcher />
            <Window>
              <WindowBar>
                <Crumb><Glyph name="home" />Pasta pessoal</Crumb>
                <Crumb>Área de Trabalho</Crumb>
                <Crumb>Programas Python</Crumb>
                <Crumb>Prototipo inicio 16 marco 2018</Crumb>
              </WindowBar>
              <Body>
                <Places />
                <Content><FileTable /></Content>
              </Body>
            </Window>
          </Workspace>
        </Monitor>
        <Monitor $short>
          <TopPanel />
          <Workspace>
            <Launcher plain />
            <Window $faded>
              <WindowBar faded>
                <Crumb><Glyph name="usb" />WALMIR</Crumb>
                <Crumb>PRINTS CÓDIGOS OBDII</Crumb>
              </WindowBar>
              <Body>
                <Places />
                <Content />
              </Body>
            </Window>
          </Workspace>
        </Monitor>
      </Desktop>
    </>
  );
}
